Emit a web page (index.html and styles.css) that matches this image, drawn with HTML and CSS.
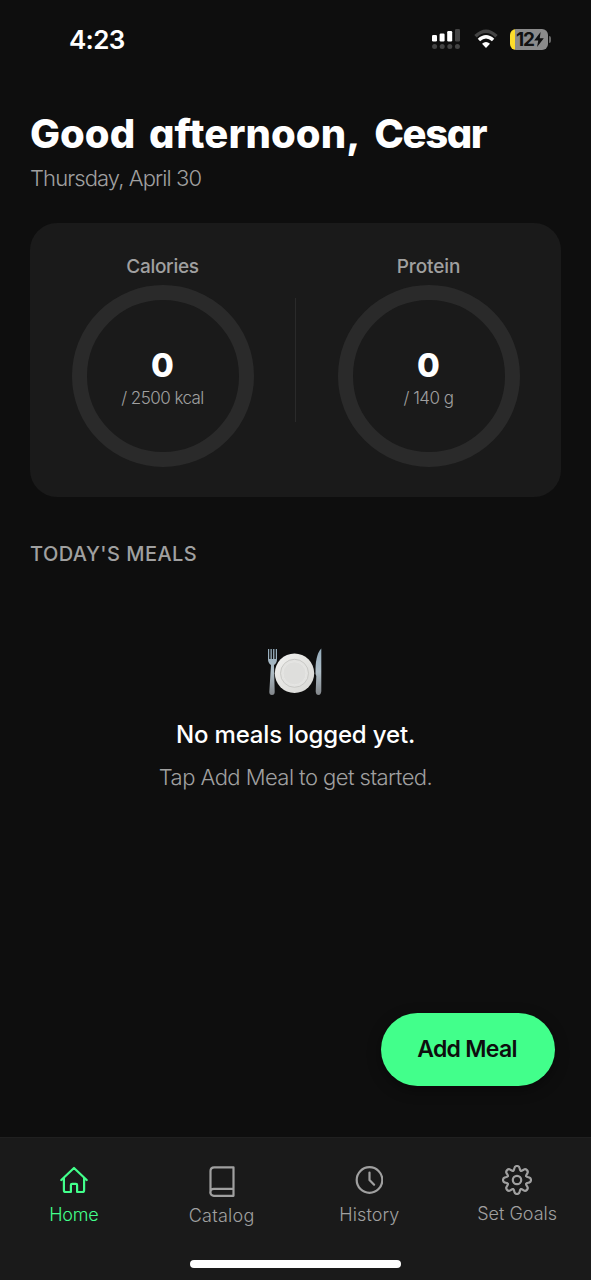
FILE: index.html
```html
<!DOCTYPE html>
<html lang="en">
<head>
<meta charset="utf-8">
<title>Meals</title>
<link rel="stylesheet" href="styles.css">
</head>
<body>
<div class="screen">
  <header class="status">
    <span class="clock">4:23</span>
    <div class="indicators">
      <svg class="signal" width="31" height="22" viewBox="0 0 31 22">
        <g fill="#fff"><rect x="0" y="7" width="5" height="6.5" rx="1.2"/><rect x="7.600" y="5.5" width="5" height="8" rx="1.2"/><rect x="15.200" y="3" width="5" height="10.500" rx="1.2"/></g>
        <g fill="#444"><rect x="23" y="1" width="5" height="12.500" rx="1.2"/><circle cx="2.600" cy="18.500" r="2.500"/><circle cx="10.200" cy="18.500" r="2.500"/><circle cx="17.800" cy="18.500" r="2.500"/><circle cx="25.400" cy="18.500" r="2.500"/></g>
      </svg>
      <svg class="wifi" width="24" height="20" viewBox="0 0 24 20" fill="none">
        <path d="M1.500 7.200Q12-2.800 22.500 7.200" stroke="#444" stroke-width="3.400"/>
        <path d="M4.900 11Q12 4.500 19.100 11" stroke="#fff" stroke-width="3.400"/>
        <path d="M8 14.800Q12 11.200 16 14.800L12 19Z" fill="#fff"/>
      </svg>
      <div class="battery"><span class="level">12</span><svg width="10" height="15" viewBox="0 0 9 14"><path d="M6 0 0 8h3.800L2.700 14 9 5.800H5.200z" fill="#111"/></svg></div>
    </div>
  </header>
  <main class="content">
    <h1 class="greeting">Good <span class="greeting-time">afternoon,</span> <span class="greeting-name">Cesar</span></h1>
    <p class="date">Thursday, April 30</p>
    <section class="card">
      <div class="metric">
        <span class="metric-name">Calories</span>
        <div class="ring"><strong class="value">0</strong><span class="goal">/ 2500 kcal</span></div>
      </div>
      <div class="divider"></div>
      <div class="metric">
        <span class="metric-name metric-protein">Protein</span>
        <div class="ring"><strong class="value">0</strong><span class="goal">/ 140 g</span></div>
      </div>
    </section>
    <h2 class="section-title">TODAY'S MEALS</h2>
    <section class="empty">
      <svg class="plate" width="56" height="50" viewBox="0 0 56 50">
        <defs>
          <linearGradient id="steel" x2="0" y2="1"><stop stop-color="#94acbc"/><stop offset=".5" stop-color="#aebdc6"/><stop offset="1" stop-color="#82868a"/></linearGradient>
          <linearGradient id="dish" x2="1" y2="1"><stop stop-color="#f1f1ef"/><stop offset="1" stop-color="#d7d7d4"/></linearGradient>
        </defs>
        <path d="M1 2v10q0 4 3 6L2.300 45q0 3 2.700 3t2.700-3L7 18q3-2 3-6V2H8.800v10H7.400V2H6.100v10H4.800V2H3.500v10H2.200V2Z" fill="url(#steel)"/>
        <circle cx="27.500" cy="26.300" r="19.700" fill="url(#dish)"/>
        <circle cx="27.500" cy="26.300" r="14" fill="#e3e3e1" stroke="#c9c9c6"/>
        <circle cx="27.500" cy="26.300" r="11.500" fill="#dededc" stroke="#e6e6e4"/>
        <path d="M54.300 1.500v42.800q-.3 3.700-2.800 3.700t-2.800-3.500l.6-15.500-.8-2Q48 8 54.300 1.500Z" fill="url(#steel)"/>
      </svg>
      <p class="empty-title">No meals logged yet.</p>
      <p class="empty-hint">Tap Add Meal to get started.</p>
    </section>
    <button class="add">Add Meal</button>
  </main>
  <footer class="tabs">
    <nav class="tab-row">
      <a class="tab active">
        <svg width="28" height="28" viewBox="0 0 28 28"><path d="M1.300 14 14 2l12.700 12M3.900 11.800V24.200q0 1.800 1.800 1.800h5.200V19q0-1.200 1.200-1.200h3.800q1.200 0 1.200 1.200v7h5.200q1.800 0 1.800-1.800V11.800"/></svg>
        <span class="home-label">Home</span>
      </a>
      <a class="tab catalog">
        <svg width="26" height="32" viewBox="0 0 26 32"><path d="M24.500 22.800H4.800a3.300 3.300 0 0 0 0 7H24.500V1.300H5.300Q1.500 1.300 1.500 5.100V26.500"/></svg>
        <span class="catalog-label">Catalog</span>
      </a>
      <a class="tab">
        <svg width="28" height="28" viewBox="0 0 28 28"><circle cx="14.500" cy="14" r="12.800"/><path d="M14.500 6.500V14l4.600 4.700"/></svg>
        <span class="history-label">History</span>
      </a>
      <a class="tab settings">
        <svg width="30" height="30" viewBox="-15 -15 30 30"><defs><path id="tooth" d="M-3.800-9.200C-2.700-9.650-2.900-10.900-2.600-12C-2.300-13.400-1.300-14 0-14S2.300-13.400 2.600-12C2.900-10.900 2.700-9.650 3.800-9.200"/></defs><circle r="4.200"/><use href="#tooth"/><use href="#tooth" transform="rotate(45)"/><use href="#tooth" transform="rotate(90)"/><use href="#tooth" transform="rotate(135)"/><use href="#tooth" transform="rotate(180)"/><use href="#tooth" transform="rotate(225)"/><use href="#tooth" transform="rotate(270)"/><use href="#tooth" transform="rotate(315)"/></svg>
        <span class="goals-label">Set Goals</span>
      </a>
    </nav>
    <div class="home-indicator"></div>
  </footer>
</div>
</body>
</html>
```
FILE: styles.css
```css
* { box-sizing: border-box; }
body { margin: 0; background: #0e0e0e; color: #fff; font-family: Inter, sans-serif; }
h1, h2, p { margin: 0; font-weight: 400; white-space: nowrap; }
.screen { width: 591px; height: 1280px; display: flex; flex-direction: column; overflow: hidden; }
.status { height: 78px; padding: 0 40px 0 69px; display: flex; align-items: center; justify-content: space-between; }
.clock { font-size: 26px; font-weight: 600; letter-spacing: -.7px; }
.indicators { display: flex; align-items: center; }
.wifi { margin: 0 12px 0 11px; }
.battery { width: 38px; height: 21px; margin-right: 3px; border-radius: 6px; background: linear-gradient(90deg, #fcdc2c 5px, #8b8b8b 5px); display: flex; align-items: center; justify-content: center; padding-left: 2px; position: relative; }
.battery::after { content: ""; position: absolute; left: 39px; top: 7px; width: 2px; height: 7px; border-radius: 0 2px 2px 0; background: #666; }
.level { color: #111; font-size: 19px; line-height: 21px; font-weight: 700; letter-spacing: -1.200px; }
.content { flex: 1; padding: 32px 30px 0; display: flex; flex-direction: column; }
.greeting { font-size: 40px; line-height: 48px; font-weight: 800; word-spacing: 5px; letter-spacing: 0; font-feature-settings: "cv11"; }
.greeting-time { letter-spacing: .1px; }
.greeting-name { letter-spacing: -1.400px; }
.date { margin-top: 5px; font-size: 22px; line-height: 30px; font-weight: 300; letter-spacing: -.9px; color: #a0a0a0; }
.card { margin-top: 30px; height: 274px; border-radius: 27px; background: #1a1a1a; display: flex; align-items: center; }
.metric { flex: 1; height: 100%; display: flex; flex-direction: column; align-items: center; padding-top: 31px; }
.metric-name { font-size: 19px; line-height: 26px; letter-spacing: -.3px; color: #a0a0a0; font-weight: 450; }
.metric-protein { letter-spacing: -.1px; }
.ring { width: 182px; height: 182px; margin-top: 5px; border: 15px solid #2a2a2a; border-radius: 50%; display: flex; flex-direction: column; align-items: center; padding-top: 44px; }
.value { font-size: 33px; line-height: 42px; font-weight: 800; }
.goal { font-size: 17px; line-height: 24px; font-weight: 300; letter-spacing: -.55px; color: #a0a0a0; }
.divider { width: 1px; height: 124px; background: #2a2a2a; }
.section-title { margin-top: 43px; font-size: 20px; line-height: 28px; font-weight: 450; letter-spacing: .45px; color: #a0a0a0; }
.empty { margin-top: 79px; display: flex; flex-direction: column; align-items: center; }
.plate { display: block; margin-right: 2px; }
.empty-title { margin-top: 21px; font-size: 24px; line-height: 34px; font-weight: 500; letter-spacing: -.15px; }
.empty-hint { margin-top: 10px; font-size: 22px; line-height: 30px; font-weight: 300; letter-spacing: -.55px; color: #a0a0a0; }
.add { align-self: flex-end; margin: 221px 6px 0 0; width: 174px; height: 73px; border: 0; border-radius: 37px; background: #42ff8b; box-shadow: 0 4px 14px #0006; color: #0e0e0e; font: 600 23px/73px Inter, sans-serif; letter-spacing: -.7px; padding: 0 2px 0 0; }
.tabs { height: 143px; background: #1a1a1a; border-top: 1px solid #202020; display: flex; flex-direction: column; align-items: center; }
.tab-row { width: 100%; height: 122px; display: flex; }
.tab { flex: 1; display: flex; flex-direction: column; align-items: center; padding-top: 28px; color: #a0a0a0; font-size: 18px; line-height: 24px; font-weight: 300; }
.tab svg { fill: none; stroke: currentColor; stroke-width: 2.200; stroke-linejoin: round; stroke-linecap: round; }
.tab span { margin-top: 9px; white-space: nowrap; }
.active { color: #42ff8b; }
.tab .home-label { letter-spacing: -.2px; }
.tab .catalog-label { margin-top: 6px; letter-spacing: .25px; }
.tab .history-label { letter-spacing: .1px; }
.settings { padding-top: 27px; }
.tab .goals-label { margin-top: 7px; }
.home-indicator { width: 211px; height: 8px; border-radius: 4px; background: #fff; }
```
